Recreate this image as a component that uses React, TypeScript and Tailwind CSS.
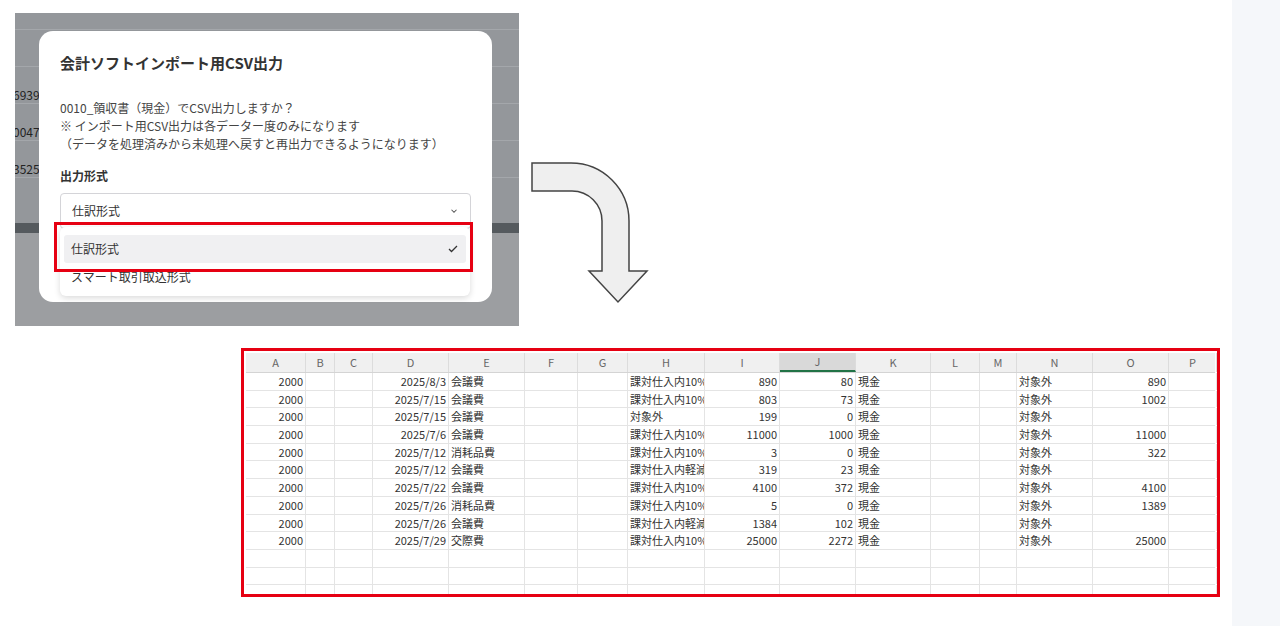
const font = { fontFamily: '"Noto Sans CJK JP", "Noto Sans", sans-serif' };

const cols = [
  { k: "A", w: 60 },
  { k: "B", w: 29 },
  { k: "C", w: 38 },
  { k: "D", w: 76 },
  { k: "E", w: 76 },
  { k: "F", w: 53 },
  { k: "G", w: 50 },
  { k: "H", w: 77 },
  { k: "I", w: 75 },
  { k: "J", w: 76 },
  { k: "K", w: 75 },
  { k: "L", w: 49 },
  { k: "M", w: 37 },
  { k: "N", w: 76 },
  { k: "O", w: 76 },
  { k: "P", w: 48 },
];

const rows: string[][] = [
  ["2000", "", "", "2025/8/3", "会議費", "", "", "課対仕入内10%", "890", "80", "現金", "", "", "対象外", "890", ""],
  ["2000", "", "", "2025/7/15", "会議費", "", "", "課対仕入内10%", "803", "73", "現金", "", "", "対象外", "1002", ""],
  ["2000", "", "", "2025/7/15", "会議費", "", "", "対象外", "199", "0", "現金", "", "", "対象外", "", ""],
  ["2000", "", "", "2025/7/6", "会議費", "", "", "課対仕入内10%", "11000", "1000", "現金", "", "", "対象外", "11000", ""],
  ["2000", "", "", "2025/7/12", "消耗品費", "", "", "課対仕入内10%", "3", "0", "現金", "", "", "対象外", "322", ""],
  ["2000", "", "", "2025/7/12", "会議費", "", "", "課対仕入内軽減", "319", "23", "現金", "", "", "対象外", "", ""],
  ["2000", "", "", "2025/7/22", "会議費", "", "", "課対仕入内10%", "4100", "372", "現金", "", "", "対象外", "4100", ""],
  ["2000", "", "", "2025/7/26", "消耗品費", "", "", "課対仕入内10%", "5", "0", "現金", "", "", "対象外", "1389", ""],
  ["2000", "", "", "2025/7/26", "会議費", "", "", "課対仕入内軽減", "1384", "102", "現金", "", "", "対象外", "", ""],
  ["2000", "", "", "2025/7/29", "交際費", "", "", "課対仕入内10%", "25000", "2272", "現金", "", "", "対象外", "25000", ""],
];
const numCols = [0, 3, 8, 9, 14];
const empty = Array.from({ length: 3 }, () => cols.map(() => ""));

function Sheet() {
  return (
    <div className="ml-[241px] mt-[22px] w-[979px] h-[249px] border-[3px] border-[#e60012] bg-white overflow-hidden">
      <div className="p-[2px]">
        <div className="flex h-[20px] bg-[#f0f0f0] border-b border-[#d4d4d4] text-[11px] text-[#666]">
          {cols.map((c) => (
            <div
              key={c.k}
              style={{ width: c.w }}
              className={`shrink-0 flex items-center justify-center border-r border-[#dcdcdc] ${c.k === "J" ? "bg-[#d9d9d9] border-b-2 border-b-[#217346]" : ""}`}
            >
              {c.k}
            </div>
          ))}
        </div>
        {[...rows, ...empty].map((r, i) => (
          <div key={i} className="flex h-[17.7px] border-b border-[#e4e4e4] text-[11px] text-[#333]">
            {r.map((v, j) => (
              <div
                key={j}
                style={{ width: cols[j].w }}
                className={`shrink-0 whitespace-nowrap overflow-hidden leading-[17px] border-r border-[#e4e4e4] px-[2px] ${numCols.includes(j) ? "text-right" : "text-left"}`}
              >
                {v}
              </div>
            ))}
          </div>
        ))}
      </div>
    </div>
  );
}

function Arrow() {
  return (
    <svg width="124" height="142" viewBox="0 0 124 142" className="mt-[162px] ml-[12px]">
      <path
        d="M1 1 H40 A58 58 0 0 1 98 59 V109 H116 L87 140 L58 109 H71 V59 A30 30 0 0 0 41 29 H1 Z"
        fill="#efefef"
        stroke="#444"
        strokeWidth="1.5"
      />
    </svg>
  );
}

function Modal() {
  return (
    <div className="relative ml-[15px] mt-[13px] w-[504px] h-[313px] bg-[#94979b] overflow-hidden">
      <div className="h-[17px] border-b border-[#a4a7ab]" />
      {[0, 1, 2, 3].map((i) => (
        <div key={i} className="h-[37px] border-b border-[#a4a7ab]" />
      ))}
      <div className="absolute left-[-2px] top-[73px] text-[12px] text-[#222]">6939</div>
      <div className="absolute left-[-2px] top-[110px] text-[12px] text-[#222]">0047</div>
      <div className="absolute left-[-2px] top-[147px] text-[12px] text-[#222]">3525</div>
      <div className="absolute left-0 top-[210px] w-full h-[10px] bg-[#555a5e]" />
      <div className="absolute left-0 top-[220px] w-full h-[93px] bg-[#9c9ea1]" />
      <div className="absolute left-[24px] top-[18px] w-[453px] h-[271px] bg-white rounded-[14px] px-[21px] pt-[21px]">
        <div className="text-[15px] font-bold text-[#333]">会計ソフトインポート用CSV出力</div>
        <div className="mt-[24px] text-[12px] leading-[18px] text-[#444]">
          <div>0010_領収書（現金）でCSV出力しますか？</div>
          <div>※ インポート用CSV出力は各データー度のみになります</div>
          <div>（データを処理済みから未処理へ戻すと再出力できるようになります）</div>
        </div>
        <div className="mt-[14px] text-[12px] font-bold text-[#333]">出力形式</div>
        <div className="mt-[8px] h-[36px] border border-[#d4d4d8] rounded-[4px] flex items-center justify-between px-[11px] text-[12px] text-[#333]">
          <span>仕訳形式</span>
          <svg width="10" height="10" viewBox="0 0 24 24" fill="none" stroke="#555" strokeWidth="2.5"><path d="m6 9 6 6 6-6" /></svg>
        </div>
        <div className="absolute left-[21px] top-[196px] w-[410px] h-[69px] bg-white rounded-[6px] shadow-[0_2px_6px_rgba(0,0,0,0.15)] px-[4px] pt-[8px]">
          <div className="h-[28px] bg-[#f0f0f2] rounded-[3px] flex items-center justify-between px-[7px] text-[12px] text-[#333]">
            <span>仕訳形式</span>
            <svg width="12" height="12" viewBox="0 0 24 24" fill="none" stroke="#333" strokeWidth="2.5"><path d="M4 12l5 5L20 6" /></svg>
          </div>
          <div className="px-[7px] pt-[5px] text-[12px] text-[#333]">スマート取引取込形式</div>
        </div>
        <div className="absolute left-[15px] top-[191px] w-[419px] h-[50px] border-[3px] border-[#e60012]" />
      </div>
    </div>
  );
}

export default function App() {
  return (
    <div className="relative w-[1280px] h-[626px] bg-white flex overflow-hidden" style={font}>
      <div className="w-[1232px] flex flex-col">
        <div className="flex">
          <Modal />
          <Arrow />
        </div>
        <Sheet />
      </div>
      <div className="w-[48px] bg-[#f5f7fa]" />
    </div>
  );
}
